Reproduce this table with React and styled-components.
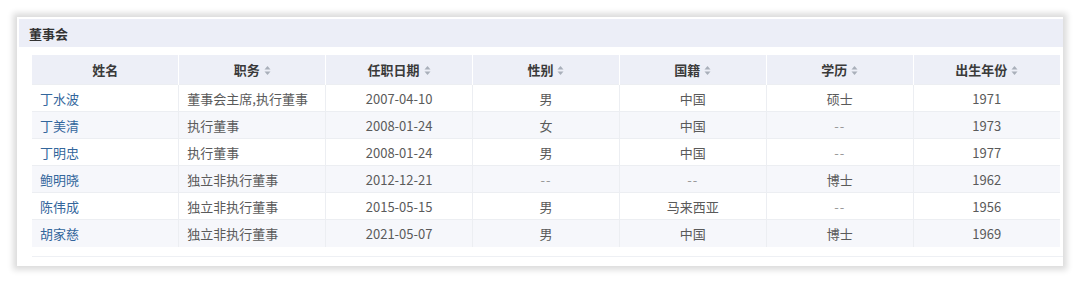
import React from 'react';
import styled, { createGlobalStyle } from 'styled-components';

const GlobalStyle = createGlobalStyle`
    html, body {
        margin: 0;
        padding: 0;
        background: #ffffff;
    }
    body {
        font-family: "Noto Sans CJK SC", "Noto Sans", sans-serif;
        font-size: 13px;
        color: #555;
    }
`;

const Page = styled.div`
    width: 1080px;
    height: 286px;
    padding: 17px 0 0 17px;
    box-sizing: border-box;
`;

const Card = styled.div`
    width: 1046px;
    height: 249px;
    box-sizing: border-box;
    background: #fff;
    padding: 2px 0 0 2px;
    box-shadow: 0 0 6px 4px rgba(0, 0, 0, 0.14);
    display: flex;
    flex-direction: column;
`;

const TitleBar = styled.div`
    height: 28px;
    background: #eceef7;
    display: flex;
    align-items: center;
    padding-left: 10px;
    font-size: 13px;
    font-weight: 700;
    color: #333;
`;

const TableWrap = styled.div`
    margin: 8px 0 0 13px;
    border-bottom: 1px solid #eef0f4;
    padding-bottom: 9px;
`;

const Table = styled.table`
    width: 1028px;
    border-collapse: collapse;
    table-layout: fixed;
`;

const Th = styled.th`
    height: 29px;
    padding: 0;
    background: #edeff7;
    font-weight: 700;
    color: #3a3a3a;
    font-size: 13px;
    text-align: center;
    border-left: 1px solid #fff;
    &:first-child {
        border-left: none;
    }
`;

const Row = styled.tr`
    background: ${(p) => (p.$alt ? '#f6f7fb' : '#ffffff')};
`;

const Td = styled.td`
    height: 27px;
    padding: 0 8px;
    box-sizing: border-box;
    font-size: 13px;
    color: ${(p) => (p.$link ? '#33669c' : '#5a5a5a')};
    text-align: ${(p) => (p.$left ? 'left' : 'center')};
    border-left: 1px solid #eceef2;
    border-top: 1px solid #eceef2;
    white-space: nowrap;
    &:first-child {
        border-left: none;
    }
`;

const Dash = styled.span`
    color: #999;
    letter-spacing: 1px;
`;

const SortIcon = styled.svg`
    margin-left: 4px;
    vertical-align: -1px;
`;

const Sort = () => (
    <SortIcon width="7" height="11" viewBox="0 0 7 11">
        <path d="M3.5 1 L6.5 4.5 L0.5 4.5 Z" fill="#a9afba" />
        <path d="M3.5 10 L6.5 6.5 L0.5 6.5 Z" fill="#a9afba" />
    </SortIcon>
);

const columns = [
    { label: '姓名', sort: false },
    { label: '职务', sort: true },
    { label: '任职日期', sort: true },
    { label: '性别', sort: true },
    { label: '国籍', sort: true },
    { label: '学历', sort: true },
    { label: '出生年份', sort: true },
];

const rows = [
    ['丁水波', '董事会主席,执行董事', '2007-04-10', '男', '中国', '硕士', '1971'],
    ['丁美清', '执行董事', '2008-01-24', '女', '中国', '--', '1973'],
    ['丁明忠', '执行董事', '2008-01-24', '男', '中国', '--', '1977'],
    ['鲍明晓', '独立非执行董事', '2012-12-21', '--', '--', '博士', '1962'],
    ['陈伟成', '独立非执行董事', '2015-05-15', '男', '马来西亚', '--', '1956'],
    ['胡家慈', '独立非执行董事', '2021-05-07', '男', '中国', '博士', '1969'],
];

const cellText = (v) => (v === '--' ? <Dash>--</Dash> : v);

export default function App() {
    return (
        <Page>
            <GlobalStyle />
            <Card>
                <TitleBar>董事会</TitleBar>
                <TableWrap>
                    <Table>
                        <thead>
                            <tr>
                                {columns.map((c) => (
                                    <Th key={c.label}>
                                        {c.label}
                                        {c.sort && <Sort />}
                                    </Th>
                                ))}
                            </tr>
                        </thead>
                        <tbody>
                            {rows.map((r, i) => (
                                <Row key={r[0]} $alt={i % 2 === 1}>
                                    {r.map((v, j) => (
                                        <Td key={j} $link={j === 0} $left={j < 2}>
                                            {cellText(v)}
                                        </Td>
                                    ))}
                                </Row>
                            ))}
                        </tbody>
                    </Table>
                </TableWrap>
            </Card>
        </Page>
    );
}
